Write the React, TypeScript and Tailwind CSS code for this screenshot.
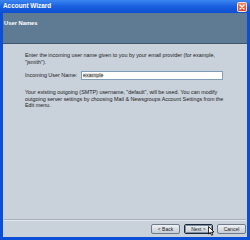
export default function App() {
  return (
    <div className="flex h-[240px] w-[250px] flex-col bg-[#0b4fd6] font-['Liberation_Sans',Tahoma,sans-serif]">
      {/* title bar */}
      <div className="flex h-[13px] shrink-0 items-center justify-between bg-gradient-to-b from-[#3b86f0] via-[#1a5fe0] to-[#0c4fd0] pl-[3px] pr-[3px]">
        <span className="text-[6.4px] font-bold leading-none text-white">Account Wizard</span>
        <div className="flex h-[10px] w-[10px] items-center justify-center rounded-[2px] border border-white/80 bg-gradient-to-b from-[#f08a5e] to-[#d8421c]">
          <svg width="6" height="6" viewBox="0 0 6 6">
            <path d="M1 1L5 5M5 1L1 5" stroke="white" strokeWidth="1.3" strokeLinecap="round" />
          </svg>
        </div>
      </div>

      <div className="mx-[3px] mb-[3px] flex flex-1 flex-col bg-[#c9d1db]">
        {/* header band */}
        <div className="h-[31px] shrink-0 border-b border-[#3f566b] bg-[#5f7b94] pl-[1px] pt-[8px]">
          <p className="text-[5.8px] font-bold leading-none text-white">User Names</p>
        </div>

        {/* content */}
        <div className="flex flex-col pl-[22px] pr-[20px] pt-[8px] text-[5.4px] leading-[6.5px] text-[#1c1c1c]">
          <p>
            Enter the incoming user name given to you by your email provider (for example,
            <br />
            "jsmith").
          </p>
          <div className="mt-[6px] flex items-center">
            <span className="w-[56px] shrink-0">Incoming User Name:</span>
            <div className="flex h-[9px] w-[142px] items-center border border-[#7f9db9] bg-white pl-[1px]">
              <span className="bg-[#e6e6e6] leading-none">example</span>
            </div>
          </div>
          <p className="mt-[9px] pr-[2px]">
            Your existing outgoing (SMTP) username, "default", will be used. You can modify
            outgoing server settings by choosing Mail &amp; Newsgroups Account Settings from
            the Edit menu.
          </p>
        </div>

        <div className="flex-1" />

        {/* separator + buttons */}
        <div className="mx-[1px] border-t border-b border-t-[#a7b0bc] border-b-[#e4e8ee]" />
        <div className="relative flex h-[16px] shrink-0 items-center justify-end gap-[4px] pr-[1px]">
          <button className="flex h-[10px] w-[29px] items-center justify-center rounded-[2px] border border-[#6f7b8a] bg-gradient-to-b from-[#eef1f4] to-[#c6ccd4] text-[5px] leading-none text-[#222]">
            &lt; Back
          </button>
          <button className="flex h-[10px] w-[29px] items-center justify-center rounded-[2px] border border-[#1d2a3a] bg-gradient-to-b from-[#eef1f4] to-[#c6ccd4] text-[5px] leading-none text-[#222] outline outline-1 -outline-offset-2 outline-[#7f8ea2]">
            Next &gt;
          </button>
          <button className="flex h-[10px] w-[29px] items-center justify-center rounded-[2px] border border-[#6f7b8a] bg-gradient-to-b from-[#eef1f4] to-[#c6ccd4] text-[5px] leading-none text-[#222]">
            Cancel
          </button>
          <svg className="absolute left-[205px] top-[5px]" width="7" height="10" viewBox="0 0 7 10">
            <path d="M0.5 0.5L0.5 8L2.3 6.3L3.6 9.3L4.8 8.8L3.6 6L6 6Z" fill="white" stroke="black" strokeWidth="0.8" />
          </svg>
        </div>
      </div>
    </div>
  );
}
